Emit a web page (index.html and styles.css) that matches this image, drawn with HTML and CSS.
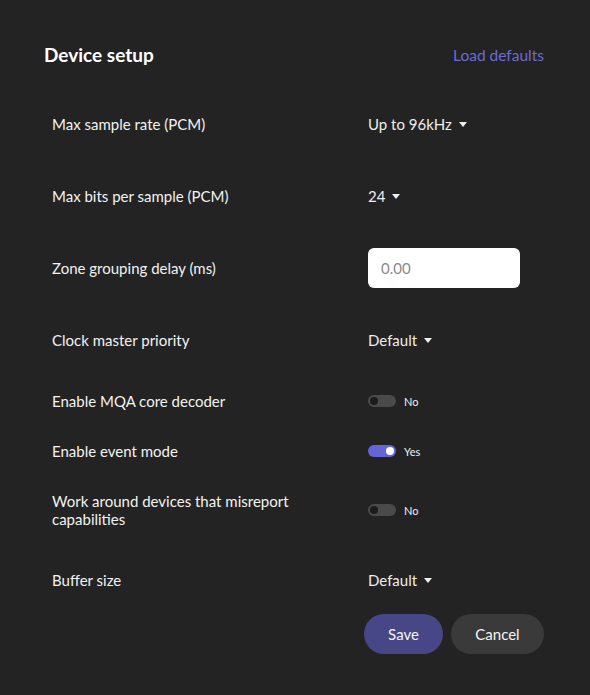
FILE: index.html
```html
<!DOCTYPE html>
<html>
<head>
<meta charset="utf-8">
<link rel="stylesheet" href="styles.css">
</head>
<body>
<div class="panel">
  <div class="header">
    <h1 class="title">Device setup</h1>
    <a class="link">Load defaults</a>
  </div>
  <div class="rows">
    <div class="row">
      <div class="label">Max sample rate (PCM)</div>
      <div class="control"><span class="dropdown">Up to 96kHz<span class="caret"></span></span></div>
    </div>
    <div class="row">
      <div class="label">Max bits per sample (PCM)</div>
      <div class="control"><span class="dropdown">24<span class="caret"></span></span></div>
    </div>
    <div class="row">
      <div class="label">Zone grouping delay (ms)</div>
      <div class="control"><input class="input" type="text" placeholder="0.00"></div>
    </div>
    <div class="row">
      <div class="label">Clock master priority</div>
      <div class="control"><span class="dropdown">Default<span class="caret"></span></span></div>
    </div>
    <div class="row row-sm">
      <div class="label">Enable MQA core decoder</div>
      <div class="control"><span class="toggle"><span class="knob"></span></span><span class="tlabel">No</span></div>
    </div>
    <div class="row row-sm">
      <div class="label">Enable event mode</div>
      <div class="control"><span class="toggle on"><span class="knob"></span></span><span class="tlabel">Yes</span></div>
    </div>
    <div class="row row-sm">
      <div class="label">Work around devices that misreport capabilities</div>
      <div class="control"><span class="toggle"><span class="knob"></span></span><span class="tlabel">No</span></div>
    </div>
    <div class="row last">
      <div class="label">Buffer size</div>
      <div class="control"><span class="dropdown">Default<span class="caret"></span></span></div>
    </div>
  </div>
  <div class="footer">
    <button class="btn primary">Save</button>
    <button class="btn secondary">Cancel</button>
  </div>
</div>
</body>
</html>
```
FILE: styles.css
```css
html, body {
  margin: 0;
  padding: 0;
  background: #232323;
}
body {
  font-family: Lato, "Open Sans", sans-serif;
  color: #f2f2f2;
  width: 590px;
  height: 695px;
}
.panel {
  padding: 44px 46px 0 44px;
}
.header {
  display: flex;
  justify-content: space-between;
  align-items: center;
  height: 22px;
}
.title {
  margin: 0;
  font-size: 19px;
  font-weight: 700;
  line-height: 22px;
  color: #ffffff;
}
.link {
  font-size: 15.5px;
  color: #6b6bd8;
  line-height: 18px;
}
.rows {
  margin-top: 22px;
}
.row {
  display: grid;
  grid-template-columns: 316px 1fr;
  align-items: center;
  padding: 16px 0 16px 8px;
  min-height: 40px;
}
.row-sm {
  min-height: 18px;
}
.row.last {
  padding-bottom: 14px;
}
.label {
  font-size: 15px;
  line-height: 18px;
  color: #f2f2f2;
  max-width: 260px;
}
.control {
  display: flex;
  align-items: center;
}
.dropdown {
  display: inline-flex;
  align-items: center;
  font-size: 15px;
  line-height: 18px;
  color: #eeeeee;
}
.caret {
  width: 0;
  height: 0;
  border-left: 4px solid transparent;
  border-right: 4px solid transparent;
  border-top: 5px solid #eeeeee;
  margin-left: 7px;
  margin-top: 1px;
}
.input {
  box-sizing: border-box;
  width: 152px;
  height: 40px;
  border: none;
  border-radius: 6px;
  background: #ffffff;
  padding: 0 13px;
  font-family: Lato, sans-serif;
  font-size: 15px;
  outline: none;
}
.input::placeholder {
  color: #8a8a8a;
}
.toggle {
  position: relative;
  display: inline-block;
  width: 28px;
  height: 12px;
  border-radius: 6px;
  background: #4a4a4a;
}
.toggle .knob {
  position: absolute;
  top: 2px;
  left: 2px;
  width: 8px;
  height: 8px;
  border-radius: 50%;
  background: #1c1c1c;
}
.toggle.on {
  background: #6465d8;
}
.toggle.on .knob {
  left: 18px;
  background: #ffffff;
}
.tlabel {
  margin-left: 8px;
  font-size: 11px;
  color: #f2f2f2;
}
.footer {
  display: flex;
  justify-content: flex-end;
  gap: 8px;
}
.btn {
  height: 40px;
  border: none;
  border-radius: 20px;
  font-family: Lato, sans-serif;
  font-size: 15px;
  color: #f4f4f4;
  padding: 0;
}
.primary {
  width: 79px;
  background: #474787;
}
.secondary {
  width: 93px;
  background: #3a3a3a;
}
```
